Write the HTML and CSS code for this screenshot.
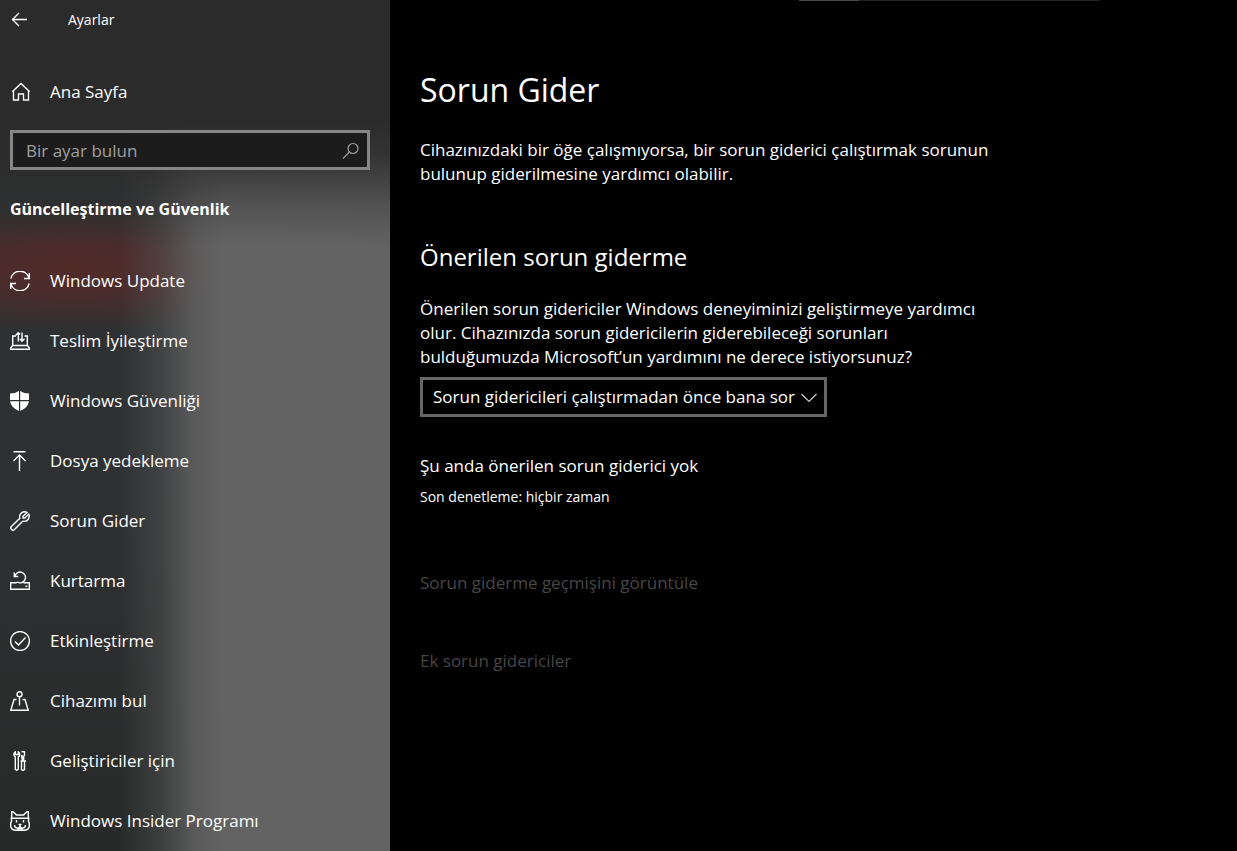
FILE: index.html
```html
<!DOCTYPE html>
<html lang="tr">
<head>
  <meta charset="UTF-8" />
  <meta name="viewport" content="width=device-width, initial-scale=1" />
  <title>Ayarlar</title>
  <link rel="stylesheet" href="styles.css">
</head>
<body>
  <div class="settings">
    <aside class="sidebar">
      <header class="titlebar">
        <button class="back" type="button" aria-label="Geri">
          <svg class="icon" viewBox="0 0 20 20"><path d="M17 9.500H2.500M9 3L2.500 9.500L9 16" /></svg>
        </button>
        <span class="app-name">Ayarlar</span>
      </header>

      <a class="home" href="#">
        <svg class="icon" viewBox="0 0 20 20"><path d="M3.500 8.500V18H8.500V12H13.500V18H18.500V8.500M2.300 9.700L11 1.500L19.700 9.700" /></svg>
        Ana Sayfa
      </a>

      <div class="search">
        <input type="text" id="search" placeholder="Bir ayar bulun" aria-label="Bir ayar bulun" />
        <svg class="search-icon" viewBox="0 0 18 18"><circle cx="11" cy="6.500" r="5" /><path d="M7.500 10L1 16.500" /></svg>
      </div>

      <h2 class="category">Güncelleştirme ve Güvenlik</h2>

      <nav class="menu">
        <a href="#">
          <svg class="icon" viewBox="0 0 20 20"><path d="M.8 7.500A9.400 9.400 0 0 1 19 7M19.300 2V7.500H14M19.200 12.500A9.400 9.400 0 0 1 1 13M.7 18V12.500H6" /></svg>
          Windows Update
        </a>
        <a href="#">
          <svg class="icon" viewBox="0 0 20 20"><path d="M6 5H2.700V14.500H17.300V5H14.500M2.700 14.500L.7 17V18.300H19.300V17L17.300 14.500M8.300 10.500V2M5.800 4.300L8.300 1.700L10 3.500M12 1.500V10M9.800 7.700L12 10.200L14.500 7.700" /></svg>
          Teslim İyileştirme
        </a>
        <a href="#">
          <svg class="icon icon-solid" viewBox="0 0 20 20"><path d="M0 2.500Q5 2.500 9 0V9H0ZM10.200 0Q14 2.500 19 2.500V9H10.200ZM0 10.200H9V20Q1 16.500 0 10.200ZM10.200 10.200H19Q18 16.500 10.200 20Z" /></svg>
          Windows Güvenliği
        </a>
        <a href="#">
          <svg class="icon" viewBox="0 0 20 20"><path d="M3.500 .7H15.500M9.500 20V4.500M3.500 10L9.500 4L15.500 10" /></svg>
          Dosya yedekleme
        </a>
        <a href="#">
          <svg class="icon" viewBox="0 0 20 20"><path d="M17 1.400L13 5.300L13 7H14.800L18.700 3.100C20.300 6.800 17.400 11.400 12.700 10.200L4.500 18.500C2.500 20.300 -.5 17.700 1.400 15.500L9.800 7.300C8.500 2.700 13.200 -.5 17 1.400Z" /></svg>
          Sorun Gider
        </a>
        <a href="#">
          <svg class="icon" viewBox="0 0 20 20"><path d="M6.500 11.700H.7V18.300H19.300V11.700H13.500M15.500 15.300H17.300M4.300 1.500V5.500H8.300M4.800 5.300A5.400 5.400 0 1 1 7.500 11.200M13 11L14 11.700M7.500 11L6.500 11.700" /></svg>
          Kurtarma
        </a>
        <a href="#">
          <svg class="icon" viewBox="0 0 20 20"><circle cx="10" cy="10" r="9.400" /><path d="M5 10.500L8.500 14L15.500 6.500" /></svg>
          Etkinleştirme
        </a>
        <a href="#">
          <svg class="icon" viewBox="0 0 20 20"><circle cx="9.500" cy="3.300" r="2.500" /><path d="M9.500 6V14.500M6.500 8.500H4L.8 19.200H18.200L15 8.500H12.500" /></svg>
          Cihazımı bul
        </a>
        <a href="#">
          <svg class="icon" viewBox="0 0 20 20"><path d="M5.300 .8C3.300 2 3.500 5.300 5.300 6V18.200Q6.800 20.300 8.300 18.200V6C10.100 5.300 10.300 2 8.300 .8V3.500H5.300ZM11.500 .7H14.500V4L13.700 5.500V9.500M12.300 9.500V5.500L11.500 4ZM10.500 10H16M11.500 10V18.500Q13 20 14.500 18.500V10" /></svg>
          Geliştiriciler için
        </a>
        <a href="#">
          <svg class="icon" viewBox="0 0 20 20"><path d="M1.700 7V.8H3L6.500 4H13.500L17 .8H18.300V7M.5 7.200H19.500M1.500 7.500V10.500L.7 12V15.500C1.500 18.500 3.500 19.300 6 19.300H14C16.500 19.300 18.500 18.500 19.300 15.500V12L18.500 10.500V7.500M6.500 9V11.500M13.500 9V11.500M8.500 13.500H11.500M10 13.500V15.500M4.500 14C4.500 17.500 9 18 10 15.500C11 18 15.500 17.500 15.500 14M8 19V17.500H12V19" /></svg>
          Windows Insider Programı
        </a>
      </nav>
    </aside>

    <main class="content">
      <div class="loading-line"><span></span></div>

      <h1>Sorun Gider</h1>
      <p class="intro">Cihazınızdaki bir öğe çalışmıyorsa, bir sorun giderici çalıştırmak sorunun bulunup giderilmesine yardımcı olabilir.</p>

      <h2>Önerilen sorun giderme</h2>
      <label class="question" for="mode">Önerilen sorun gidericiler Windows deneyiminizi geliştirmeye yardımcı olur. Cihazınızda sorun gidericilerin giderebileceği sorunları bulduğumuzda Microsoft’un yardımını ne derece istiyorsunuz?</label>
      <div class="dropdown">
        <select id="mode">
          <option>Sorun gidericileri çalıştırmadan önce bana sor</option>
        </select>
        <svg class="chevron" viewBox="0 0 16 10"><path d="M.5 1L8 8.500L15.500 1" /></svg>
      </div>

      <p class="status">Şu anda önerilen sorun giderici yok</p>
      <p class="last-check">Son denetleme: hiçbir zaman</p>

      <div class="links">
        <a href="#">Sorun giderme geçmişini görüntüle</a>
        <a href="#">Ek sorun gidericiler</a>
      </div>
    </main>
  </div>
</body>
</html>
```
FILE: styles.css
```css
* {
  box-sizing: border-box;
}

body {
  margin: 0;
  background: #000;
  color: #fff;
  font-family: "Open Sans", "Noto Sans", sans-serif;
  font-size: 17px;
  line-height: 24px;
}

h1, h2, p {
  margin: 0;
  font-weight: 400;
}

a {
  color: inherit;
  text-decoration: none;
}

.settings {
  display: grid;
  grid-template-columns: 390px 1fr;
  min-height: 100vh;
}

/* acrylic panel: dark top, light right side, red glow behind the first item */
.sidebar {
  background:
    linear-gradient(#2c2b2b 0, #2c2b2b 120px, rgba(44, 43, 43, 0.85) 155px, rgba(44, 43, 43, 0.3) 205px, rgba(44, 43, 43, 0) 245px),
    linear-gradient(90deg, rgba(98, 98, 98, 0) 120px, rgba(98, 98, 98, 0.35) 160px, rgba(98, 98, 98, 0.85) 195px, #636363 225px, #626262 100%),
    radial-gradient(ellipse 230px 65px at 70px 268px, #532b29 0, rgba(80, 43, 41, 0.8) 40%, rgba(46, 47, 48, 0) 100%),
    linear-gradient(#2f3234, #2e3031 500px, #282a2a);
}

.icon {
  flex: none;
  width: 20px;
  height: 20px;
  fill: none;
  stroke: #fff;
  stroke-width: 1.4;
}

.icon-solid {
  fill: #fff;
  stroke: none;
}

.titlebar {
  display: flex;
  align-items: center;
  gap: 38px;
  height: 40px;
  padding-left: 10px;
}

.back {
  display: flex;
  padding: 0;
  border: none;
  background: none;
}

.app-name {
  font-size: 14px;
}

.home {
  display: flex;
  align-items: center;
  gap: 20px;
  height: 60px;
  margin-top: 22px;
  padding-left: 10px;
}

.search {
  position: relative;
  margin: 8px 20px 0 10px;
}

.search input {
  display: block;
  width: 100%;
  height: 40px;
  padding: 0 40px 0 13px;
  border: 3px solid #868686;
  border-radius: 0;
  background: #1c1c1c;
  color: #fff;
  font: inherit;
}

.search input::placeholder {
  color: #a0a0a0;
  opacity: 1;
}

.search-icon {
  position: absolute;
  top: 12px;
  right: 10px;
  width: 18px;
  height: 18px;
  fill: none;
  stroke: #a0a0a0;
  stroke-width: 1.2;
}

.category {
  margin-top: 27px;
  padding-left: 10px;
  font-size: 16px;
  font-weight: 700;
}

.menu {
  margin-top: 30px;
}

.menu a {
  display: flex;
  align-items: center;
  gap: 20px;
  height: 60px;
  padding-left: 10px;
}

.content {
  padding: 0 30px;
}

.loading-line {
  width: 301px;
  height: 1px;
  margin-left: 379px;
  background: #222;
}

.loading-line span {
  display: block;
  width: 60px;
  height: 1px;
  background: #4a4a4a;
}

.content h1 {
  margin-top: 65px;
  font-size: 32px;
  line-height: 48px;
}

.intro {
  max-width: 570px;
  margin-top: 24px;
}

.content h2 {
  margin-top: 55px;
  font-size: 24px;
  line-height: 32px;
}

.question {
  display: block;
  max-width: 570px;
  margin-top: 24px;
}

.dropdown {
  position: relative;
  width: 407px;
  margin-top: 8px;
}

.dropdown select {
  display: block;
  width: 100%;
  height: 40px;
  padding: 0 20px 0 10px;
  border: 3px solid #666;
  border-radius: 0;
  background: #000;
  color: #fff;
  font: inherit;
  appearance: none;
}

.chevron {
  position: absolute;
  top: 16px;
  right: 10px;
  width: 16px;
  height: 10px;
  fill: none;
  stroke: #ccc;
  stroke-width: 1.2;
  pointer-events: none;
}

.status {
  margin-top: 37px;
}

.last-check {
  margin-top: 7px;
  font-size: 14px;
}

.links {
  display: flex;
  flex-direction: column;
  align-items: flex-start;
  gap: 54px;
  margin-top: 62px;
  color: #464646;
}
```
